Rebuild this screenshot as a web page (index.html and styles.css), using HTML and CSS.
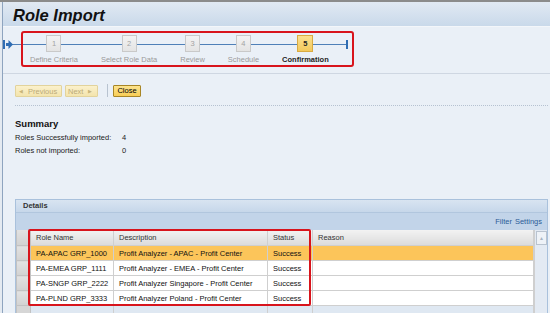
FILE: index.html
```html
<!DOCTYPE html>
<html lang="en">
<head>
    <meta charset="UTF-8">
    <meta name="viewport" content="width=device-width, initial-scale=1.0">
    <title>Role Import</title>
    <link rel="stylesheet" href="styles.css">
</head>
<body>
    <div class="page">
        <header class="title-bar">
            <h1>Role Import</h1>
        </header>

        <div class="roadmap">
            <svg class="rm-start" width="10" height="9" viewBox="0 0 10 9">
                <rect x="0" y="0" width="2" height="9" fill="#2f6db3"/>
                <rect x="3" y="3" width="3" height="3" fill="#2f6db3"/>
                <polygon points="5.5,0 10,4.5 5.5,9" fill="#2f6db3"/>
            </svg>
            <div class="rm-steps">
                <div class="rm-step"><span class="rm-box">1</span><span class="rm-label">Define Criteria</span></div>
                <div class="rm-step"><span class="rm-box">2</span><span class="rm-label">Select Role Data</span></div>
                <div class="rm-step"><span class="rm-box">3</span><span class="rm-label">Review</span></div>
                <div class="rm-step"><span class="rm-box">4</span><span class="rm-label">Schedule</span></div>
                <div class="rm-step current"><span class="rm-box">5</span><span class="rm-label">Confirmation</span></div>
                <svg class="rm-end" width="9" height="9" viewBox="0 0 9 9">
                    <rect x="0" y="4" width="7" height="1" fill="#4f80b8"/>
                    <rect x="6" y="0" width="2" height="9" fill="#2f6db3"/>
                </svg>
            </div>
        </div>

        <div class="content">
            <div class="toolbar">
                <button class="btn btn-prev" disabled><span class="arr">&#9664;</span>Previous</button>
                <button class="btn btn-next" disabled>Next<span class="arr">&#9654;</span></button>
                <span class="tb-sep"></span>
                <button class="btn btn-main">Close</button>
            </div>

            <div class="summary">
                <h2>Summary</h2>
                <div class="sum-row"><span class="sum-label">Roles Successfully imported:</span><span>4</span></div>
                <div class="sum-row"><span class="sum-label">Roles not imported:</span><span>0</span></div>
            </div>

            <div class="panel">
                <div class="panel-head">Details</div>
                <div class="panel-tools"><a href="#">Filter</a><a href="#">Settings</a></div>
                <div class="grid-wrap">
                    <table class="grid">
                        <thead>
                            <tr>
                                <th class="sel"></th>
                                <th class="c-role">Role Name</th>
                                <th class="c-desc">Description</th>
                                <th class="c-status">Status</th>
                                <th>Reason</th>
                            </tr>
                        </thead>
                        <tbody>
                            <tr class="selected">
                                <td class="sel"></td>
                                <td>PA-APAC GRP_1000</td>
                                <td>Profit Analyzer - APAC - Profit Center</td>
                                <td>Success</td>
                                <td></td>
                            </tr>
                            <tr>
                                <td class="sel"></td>
                                <td>PA-EMEA GRP_1111</td>
                                <td>Profit Analyzer - EMEA - Profit Center</td>
                                <td>Success</td>
                                <td></td>
                            </tr>
                            <tr>
                                <td class="sel"></td>
                                <td>PA-SNGP GRP_2222</td>
                                <td>Profit Analyzer Singapore - Profit Center</td>
                                <td>Success</td>
                                <td></td>
                            </tr>
                            <tr>
                                <td class="sel"></td>
                                <td>PA-PLND GRP_3333</td>
                                <td>Profit Analyzer Poland - Profit Center</td>
                                <td>Success</td>
                                <td></td>
                            </tr>
                            <tr class="empty">
                                <td class="sel"></td>
                                <td></td>
                                <td></td>
                                <td></td>
                                <td></td>
                            </tr>
                        </tbody>
                    </table>
                    <div class="scrollbar">
                        <span class="sb-up">&#9650;</span>
                    </div>
                    <div class="mark"></div>
                </div>
            </div>
        </div>
    </div>
</body>
</html>
```

FILE: styles.css
```css
body {
    margin: 0;
    padding: 0;
    background-color: #e4eaf1;
    border-top: 2px solid #8b8b8b;
    font-family: "Liberation Sans", Arial, sans-serif;
    font-size: 7.5px;
    color: #222;
    overflow: hidden;
}
.page {
    margin-left: 2px;
    border-left: 1px solid #8ea4bf;
    background-color: #eaf0f7;
    min-height: 320px;
}

/* title */
.title-bar {
    padding: 3px 0 0 10px;
    height: 21px;
    background: linear-gradient(#e1e9f3, #c9d9ea);
    border-bottom: 1px solid #f3f6fa;
}
.title-bar h1 {
    margin: 0;
    font-size: 16.5px;
    line-height: 21px;
    font-style: italic;
    font-weight: bold;
    color: #111;
}

/* roadmap */
.roadmap {
    position: relative;
    display: flex;
    align-items: flex-start;
    padding: 4px 0 6px 0;
    border-bottom: 1px solid #cfd7e2;
}
.roadmap::before {
    content: "";
    position: absolute;
    left: 9px;
    top: 17px;
    width: 336px;
    height: 1px;
    background-color: #4f80b8;
}
.rm-start {
    margin: 9px 8px 0 0;
    position: relative;
}
.rm-steps {
    position: relative;
    display: flex;
    align-items: flex-start;
    gap: 23px;
    padding: 0 3px 1px 7px;
    border: 2px solid #d8141c;
    border-radius: 3px;
}
.rm-step {
    display: flex;
    flex-direction: column;
    align-items: center;
}
.rm-box {
    box-sizing: border-box;
    width: 15px;
    height: 17px;
    margin-top: 2px;
    background: linear-gradient(#f3f3f3, #e4e4e4);
    border: 1px solid #c9c9c9;
    color: #a3a3a3;
    text-align: center;
    line-height: 15px;
}
.rm-label {
    margin-top: 3px;
    line-height: 9px;
    color: #9a9a9a;
    white-space: nowrap;
}
.rm-step.current .rm-box {
    width: 16px;
    background: linear-gradient(#fbe08f, #f3c95c);
    border-color: #d9ab42;
    color: #222;
    font-weight: bold;
}
.rm-step.current .rm-label {
    color: #222;
    font-weight: bold;
}
.rm-end {
    margin: 7px 0 0 -12px;
}

/* content */
.content {
    padding: 0 2px 0 12px;
}
.toolbar {
    display: flex;
    align-items: center;
    gap: 3px;
    padding: 10px 0 8px 0;
    border-bottom: 1px dotted #b6c2d1;
}
.btn {
    box-sizing: border-box;
    height: 12px;
    padding: 0;
    border: 1px solid #e2d39c;
    border-radius: 1px;
    background: linear-gradient(#fbf1cc, #f3e4ad);
    color: #bcab78;
    font-family: inherit;
    font-size: 7.5px;
    line-height: 10px;
    text-align: left;
}
.btn .arr {
    font-size: 5px;
    vertical-align: 1px;
    color: #c9b57a;
}
.btn-prev {
    width: 47px;
    padding-left: 3px;
}
.btn-prev .arr {
    margin-right: 5px;
}
.btn-next {
    width: 33px;
    padding-left: 2px;
}
.btn-next .arr {
    margin-left: 5px;
}
.btn-main {
    width: 28px;
    margin-left: 2px;
    border-color: #a88626;
    background: linear-gradient(#fde48f, #f8cd55);
    color: #000;
    text-align: center;
}
.tb-sep {
    width: 1px;
    height: 13px;
    margin-left: 6px;
    background-color: #b8c3d0;
}

/* summary */
.summary {
    margin-top: 12px;
}
.summary h2 {
    margin: 0 0 2px 0;
    font-size: 9.5px;
    line-height: 11px;
    color: #111;
}
.sum-row {
    display: flex;
    line-height: 13px;
    color: #222;
}
.sum-label {
    width: 107px;
}

/* details panel */
.panel {
    margin-top: 42px;
    border: 1px solid #a9c1dc;
}
.panel-head {
    height: 12px;
    padding-left: 7px;
    line-height: 12px;
    font-weight: bold;
    color: #333;
    background: linear-gradient(#d8e4f1, #c6d7ea);
    border-bottom: 1px solid #b1c6de;
}
.panel-tools {
    display: flex;
    justify-content: flex-end;
    gap: 3px;
    height: 17px;
    padding-right: 5px;
    line-height: 17px;
    background-color: #c2d4e9;
}
.panel-tools a {
    color: #2c5c98;
    text-decoration: none;
}
.grid-wrap {
    position: relative;
    display: flex;
}
.grid {
    flex: 1;
    border-collapse: collapse;
    table-layout: fixed;
}
.grid th, .grid td {
    height: 14px;
    padding: 0 0 0 5px;
    border: 1px solid #cfcfcf;
    text-align: left;
    font-weight: normal;
    white-space: nowrap;
    overflow: hidden;
    background-color: #fff;
    color: #111;
}
.grid th {
    height: 15px;
    background: linear-gradient(#f2f2f2, #dcdcdc);
    color: #333;
    border-top: none;
}
.grid .sel {
    width: 8px;
    background: linear-gradient(#e2e2e2, #d2d2d2);
    border-color: #c2c2c2;
}
.grid .c-role {
    width: 77px;
}
.grid .c-desc {
    width: 148px;
}
.grid .c-status {
    width: 39px;
}
.grid tr.selected td {
    background-color: #fcc55a;
}
.grid tr.selected td.sel {
    background: linear-gradient(#e2e2e2, #d2d2d2);
}
.grid tr.empty td {
    height: 10px;
    background-color: #dfe8f2;
    border-bottom: none;
}
.grid tr.empty td.sel {
    background: #d6d6d6;
}
.scrollbar {
    width: 12px;
    background-color: #e3eaf3;
    border-left: 1px solid #cfcfcf;
}
.sb-up {
    display: block;
    box-sizing: border-box;
    height: 14px;
    margin: 1px 0 0 1px;
    border: 1px solid #b9c3cf;
    background-color: #eef2f7;
    color: #a8b4c2;
    font-size: 5px;
    line-height: 12px;
    text-align: center;
}
.mark {
    position: absolute;
    left: 12px;
    top: -1px;
    width: 279px;
    height: 73px;
    border: 2px solid #d8141c;
    border-radius: 2px;
}
```
